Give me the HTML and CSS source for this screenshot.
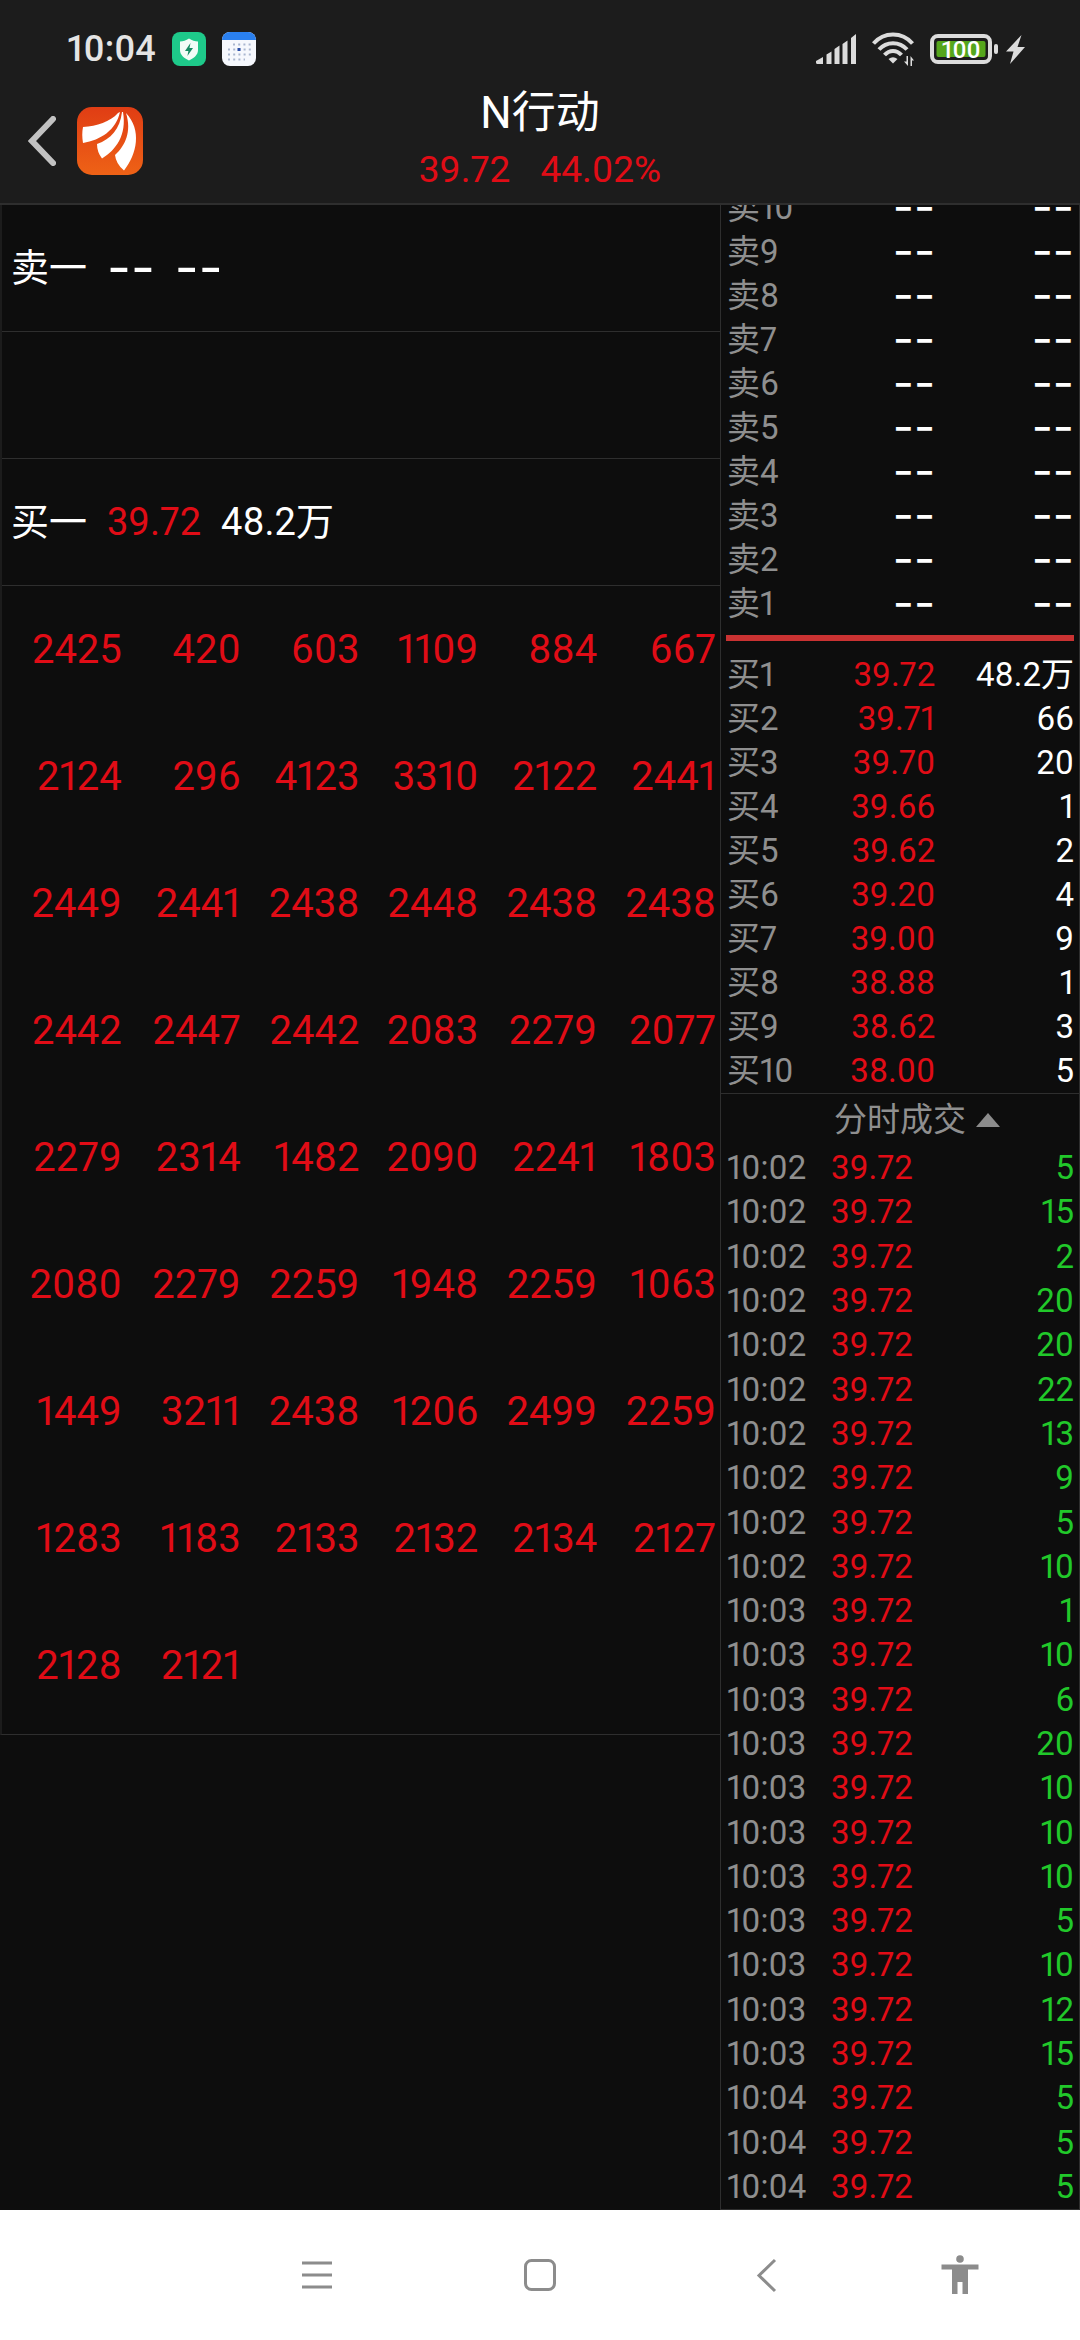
FILE: index.html
```html
<!DOCTYPE html>
<html lang="zh-CN">
<head>
<meta charset="utf-8">
<meta name="viewport" content="width=device-width, initial-scale=1">
<title>N行动</title>
<link rel="stylesheet" href="styles.css">
</head>
<body>
<div class="app">
  <div class="statusbar">
    <div class="status-left">
      <span class="clock">10:04</span>
      <svg class="app-badge" viewBox="0 0 34 34" aria-hidden="true"><rect width="34" height="34" rx="8" fill="#1ec98a"/><path d="M17 6.500C20 8.500 23 9.200 26 9.500V18c0 5-4 8-9 10.500C12 26 8 23 8 18V9.500c3-.3 6-1 9-3z" fill="#f1fcf7"/><path d="M18.500 11l-5.500 8h3.400l-1 5 5.600-8h-3.500z" fill="#168a63"/></svg>
      <svg class="app-badge" viewBox="0 0 34 34" aria-hidden="true"><rect width="34" height="34" rx="8" fill="#f6f8fd"/><path d="M0 8a8 8 0 0 1 8-8h18a8 8 0 0 1 8 8z" fill="#2a80f0"/><path d="M11 12.500h18M6 17.500h23M6 22.500h23M6 27.500h17" stroke="#a9b6cf" stroke-width="2" stroke-dasharray="2 3.200"/><rect x="15.500" y="16" width="3" height="3" fill="#2b4fa8"/></svg>
    </div>
    <div class="status-right">
      <svg class="ic-signal" viewBox="0 0 40 30" aria-hidden="true"><path d="M0 27l7-4v7H1.500Q0 30 0 28.500zM10.500 20.500l5-3V30h-5zM18.500 15l5-3.500V30h-5zM26.500 10l5-3.500V30h-5zM35 4l5-4v30h-5z" fill="#dcdcdc"/></svg>
      <svg class="ic-wifi" viewBox="0 0 42 34" aria-hidden="true"><g fill="none" stroke="#dcdcdc" stroke-width="4"><path d="M1.500 11.500C12-.5 30-.5 40.500 11.500"/><path d="M7 17.500c7.500-8.500 20.500-8.500 28 0"/><path d="M12.500 23c5-5.500 12-5.500 17 0"/></g><path d="M16.500 27q4.500-3.500 9 0L21 31.500z" fill="#dcdcdc"/><path d="M36 24v10l-4-4.500h2.500V24zM38.500 34V24l3.500 4.500h-2V34z" fill="#dcdcdc"/></svg>
      <svg class="ic-battery" viewBox="0 0 68 30" aria-hidden="true"><rect x="2" y="2" width="58" height="26" rx="6" fill="none" stroke="#dcdcdc" stroke-width="4"/><rect x="6.500" y="7" width="49" height="16" rx="2" fill="#55a61c"/><rect x="64" y="10" width="4" height="10" rx="2" fill="#dcdcdc"/><text x="31" y="24" text-anchor="middle" class="battery-text">100</text></svg>
      <svg class="ic-bolt" viewBox="0 0 19 29" aria-hidden="true"><path d="M15.500 0L0 16.500h7.500L4 29 19 12h-7.500z" fill="#dcdcdc"/></svg>
    </div>
  </div>

  <header class="titlebar">
    <div class="title-actions">
      <button class="icon-button" type="button" aria-label="返回"><svg class="ic-back" viewBox="0 0 28 50" aria-hidden="true"><path d="M25 3L4 25l21 22" fill="none" stroke="#c2c2c2" stroke-width="6" stroke-linecap="round"/></svg></button>
      <a class="logo" href="#" aria-label="首页"><svg class="ic-logo" viewBox="0 0 66 68" aria-hidden="true"><defs><linearGradient id="lg" x1="0" y1="0" x2="0" y2="1"><stop offset="0" stop-color="#e03d14"/><stop offset="1" stop-color="#ee6216"/></linearGradient></defs><rect width="66" height="68" rx="15" fill="url(#lg)"/><path d="M41 6C33 15 20 19 6 20c-1 5-1 10 0 16C24 33 39 23 43 5z" fill="#fff"/><path d="M45 5C43 22 34 32 20 37q0 8 5 14.500C39 43 50 28 46 5z" fill="#fff"/><path d="M49 6c6 19-1 33-11 42q1 9 9 15.500C60 47 65 23 49 6z" fill="#fff"/></svg></a>
    </div>
    <div class="title-text">
      <h1 class="name">N行动</h1>
      <p class="quote"><span>39.72</span><span>44.02%</span></p>
    </div>
    <div></div>
  </header>

  <main class="board">
    <section class="queue">
      <div class="queue-row"><span>卖一</span><span class="dash">--</span><span class="dash">--</span></div>
      <div class="queue-row"></div>
      <div class="queue-row"><span>买一</span><span class="up">39.72</span><span>48.2万</span></div>
      <table class="orders">
        <tbody>
          <tr><td>2425</td><td>420</td><td>603</td><td>1109</td><td>884</td><td>667</td></tr>
          <tr><td>2124</td><td>296</td><td>4123</td><td>3310</td><td>2122</td><td>2441</td></tr>
          <tr><td>2449</td><td>2441</td><td>2438</td><td>2448</td><td>2438</td><td>2438</td></tr>
          <tr><td>2442</td><td>2447</td><td>2442</td><td>2083</td><td>2279</td><td>2077</td></tr>
          <tr><td>2279</td><td>2314</td><td>1482</td><td>2090</td><td>2241</td><td>1803</td></tr>
          <tr><td>2080</td><td>2279</td><td>2259</td><td>1948</td><td>2259</td><td>1063</td></tr>
          <tr><td>1449</td><td>3211</td><td>2438</td><td>1206</td><td>2499</td><td>2259</td></tr>
          <tr><td>1283</td><td>1183</td><td>2133</td><td>2132</td><td>2134</td><td>2127</td></tr>
          <tr><td>2128</td><td>2121</td><td></td><td></td><td></td><td></td></tr>
        </tbody>
      </table>
    </section>

    <section class="side">
      <table class="ladder sells">
        <tbody>
          <tr><th scope="row">卖10</th><td class="dash">--</td><td class="dash">--</td></tr>
          <tr><th scope="row">卖9</th><td class="dash">--</td><td class="dash">--</td></tr>
          <tr><th scope="row">卖8</th><td class="dash">--</td><td class="dash">--</td></tr>
          <tr><th scope="row">卖7</th><td class="dash">--</td><td class="dash">--</td></tr>
          <tr><th scope="row">卖6</th><td class="dash">--</td><td class="dash">--</td></tr>
          <tr><th scope="row">卖5</th><td class="dash">--</td><td class="dash">--</td></tr>
          <tr><th scope="row">卖4</th><td class="dash">--</td><td class="dash">--</td></tr>
          <tr><th scope="row">卖3</th><td class="dash">--</td><td class="dash">--</td></tr>
          <tr><th scope="row">卖2</th><td class="dash">--</td><td class="dash">--</td></tr>
          <tr><th scope="row">卖1</th><td class="dash">--</td><td class="dash">--</td></tr>
        </tbody>
      </table>
      <div class="divider"></div>
      <table class="ladder buys">
        <tbody>
          <tr><th scope="row">买1</th><td class="up">39.72</td><td>48.2万</td></tr>
          <tr><th scope="row">买2</th><td class="up">39.71</td><td>66</td></tr>
          <tr><th scope="row">买3</th><td class="up">39.70</td><td>20</td></tr>
          <tr><th scope="row">买4</th><td class="up">39.66</td><td>1</td></tr>
          <tr><th scope="row">买5</th><td class="up">39.62</td><td>2</td></tr>
          <tr><th scope="row">买6</th><td class="up">39.20</td><td>4</td></tr>
          <tr><th scope="row">买7</th><td class="up">39.00</td><td>9</td></tr>
          <tr><th scope="row">买8</th><td class="up">38.88</td><td>1</td></tr>
          <tr><th scope="row">买9</th><td class="up">38.62</td><td>3</td></tr>
          <tr><th scope="row">买10</th><td class="up">38.00</td><td>5</td></tr>
        </tbody>
      </table>
      <button class="trades-toggle" type="button"><span>分时成交</span><svg class="ic-up" viewBox="0 0 24 14" aria-hidden="true"><path d="M12 0l12 14H0z" fill="#8c8c8c"/></svg></button>
      <table class="trades">
        <tbody>
          <tr><td>10:02</td><td class="up">39.72</td><td class="down">5</td></tr>
          <tr><td>10:02</td><td class="up">39.72</td><td class="down">15</td></tr>
          <tr><td>10:02</td><td class="up">39.72</td><td class="down">2</td></tr>
          <tr><td>10:02</td><td class="up">39.72</td><td class="down">20</td></tr>
          <tr><td>10:02</td><td class="up">39.72</td><td class="down">20</td></tr>
          <tr><td>10:02</td><td class="up">39.72</td><td class="down">22</td></tr>
          <tr><td>10:02</td><td class="up">39.72</td><td class="down">13</td></tr>
          <tr><td>10:02</td><td class="up">39.72</td><td class="down">9</td></tr>
          <tr><td>10:02</td><td class="up">39.72</td><td class="down">5</td></tr>
          <tr><td>10:02</td><td class="up">39.72</td><td class="down">10</td></tr>
          <tr><td>10:03</td><td class="up">39.72</td><td class="down">1</td></tr>
          <tr><td>10:03</td><td class="up">39.72</td><td class="down">10</td></tr>
          <tr><td>10:03</td><td class="up">39.72</td><td class="down">6</td></tr>
          <tr><td>10:03</td><td class="up">39.72</td><td class="down">20</td></tr>
          <tr><td>10:03</td><td class="up">39.72</td><td class="down">10</td></tr>
          <tr><td>10:03</td><td class="up">39.72</td><td class="down">10</td></tr>
          <tr><td>10:03</td><td class="up">39.72</td><td class="down">10</td></tr>
          <tr><td>10:03</td><td class="up">39.72</td><td class="down">5</td></tr>
          <tr><td>10:03</td><td class="up">39.72</td><td class="down">10</td></tr>
          <tr><td>10:03</td><td class="up">39.72</td><td class="down">12</td></tr>
          <tr><td>10:03</td><td class="up">39.72</td><td class="down">15</td></tr>
          <tr><td>10:04</td><td class="up">39.72</td><td class="down">5</td></tr>
          <tr><td>10:04</td><td class="up">39.72</td><td class="down">5</td></tr>
          <tr><td>10:04</td><td class="up">39.72</td><td class="down">5</td></tr>
        </tbody>
      </table>
    </section>
  </main>

  <nav class="navbar">
    <button class="icon-button" type="button" aria-label="菜单"><svg class="ic-nav" viewBox="0 0 40 40" aria-hidden="true"><path d="M5 8h30M5 20h30M5 32h30" stroke="#8c8c8c" stroke-width="3"/></svg></button>
    <button class="icon-button" type="button" aria-label="主屏幕"><svg class="ic-nav" viewBox="0 0 40 40" aria-hidden="true"><rect x="5.500" y="5.500" width="29" height="29" rx="6" fill="none" stroke="#8c8c8c" stroke-width="3"/></svg></button>
    <button class="icon-button" type="button" aria-label="后退"><svg class="ic-nav" viewBox="0 0 40 40" aria-hidden="true"><path d="M28 5L12 20.500 28 36" fill="none" stroke="#8c8c8c" stroke-width="3"/></svg></button>
    <button class="icon-button" type="button" aria-label="无障碍"><svg class="ic-nav" viewBox="0 0 40 40" aria-hidden="true"><circle cx="20" cy="4" r="3.800" fill="#8c8c8c"/><path d="M1.500 9.500h37v5H28V39h-5.500V27h-5v12H12V14.500H1.500z" fill="#8c8c8c"/></svg></button>
  </nav>
</div>
</body>
</html>
```
FILE: styles.css
```css
* {
  box-sizing: border-box;
}

body {
  margin: 0;
  background: #0d0d0d;
  color: #fff;
  font-family: Roboto, "Noto Sans CJK SC", sans-serif;
  font-variant-numeric: proportional-nums;
}

h1,
p {
  margin: 0;
  font-weight: 400;
}

svg {
  display: block;
}

table {
  border-spacing: 0;
}

th,
td {
  padding: 0;
  font-weight: 400;
}

button {
  padding: 0;
  border: 0;
  background: none;
  font: inherit;
}

.app {
  display: flex;
  flex-direction: column;
  min-height: 100vh;
}

/* Status bar */
.statusbar {
  display: flex;
  justify-content: space-between;
  align-items: center;
  height: 84px;
  padding: 14px 55px 0 67px;
  background: #1c1c1c;
}

.status-left,
.status-right {
  display: flex;
  align-items: center;
  gap: 16px;
}

.clock {
  color: #e4e4e4;
  font-size: 36px;
  font-weight: 500;
  line-height: 40px;
}

.app-badge {
  width: 34px;
  height: 34px;
}

.ic-signal {
  width: 40px;
  height: 30px;
}

.ic-wifi {
  width: 42px;
  height: 34px;
}

.ic-battery {
  width: 68px;
  height: 30px;
}

.battery-text {
  fill: #fff;
  font-size: 24px;
  font-weight: 500;
}

.ic-bolt {
  width: 19px;
  height: 29px;
  margin-left: -8px;
}

/* Title bar */
.titlebar {
  display: grid;
  grid-template-columns: 1fr auto 1fr;
  align-items: center;
  padding-bottom: 6px;
  border-bottom: 2px solid #2e2e2e;
  background: #1c1c1c;
}

.title-actions {
  display: flex;
  align-items: center;
  gap: 21px;
  padding-left: 28px;
}

.icon-button {
  display: grid;
  place-items: center;
}

.ic-back {
  width: 28px;
  height: 50px;
}

.ic-logo {
  width: 66px;
  height: 68px;
}

.name {
  font-size: 44px;
  line-height: 59px;
  text-align: center;
}

.quote {
  display: flex;
  justify-content: center;
  gap: 30px;
  color: #e00c16;
  font-size: 37px;
  line-height: 54px;
}

/* Two-column board */
.board {
  display: grid;
  grid-template-columns: 2fr 1fr;
  flex: 1;
}

.up {
  color: #e00c16;
}

.down {
  color: #21c82a;
}

.queue {
  align-self: start;
  border-left: 2px solid #1c1c1c;
  border-bottom: 1px solid #2e2e2e;
  font-size: 38px;
}

.queue-row {
  display: flex;
  align-items: center;
  gap: 20px;
  height: 127px;
  padding-left: 9px;
  border-bottom: 1px solid #2e2e2e;
  line-height: 56px;
}

.queue .dash {
  font-family: Inter, sans-serif;
  font-size: 52px;
}

.orders {
  width: 100%;
  padding: 0 4px 5px 1px;
  table-layout: fixed;
  color: #e00c16;
  font-size: 40px;
}

.orders td {
  height: 127px;
  text-align: right;
}

.side {
  display: flex;
  flex-direction: column;
  overflow: hidden;
  border: 1px solid #2e2e2e;
  border-top: 0;
  font-size: 33px;
  line-height: 44px;
}

.ladder,
.trades {
  padding: 0 5px 0 6px;
  table-layout: fixed;
}

.ladder {
  width: 100%;
}

.ladder tr {
  height: 44px;
}

.ladder th {
  width: 28%;
  color: #8f8f8f;
  text-align: left;
}

.ladder td {
  height: 44px;
  text-align: right;
}

.ladder td:nth-child(2) {
  width: 32%;
}

.side .dash {
  font-family: Inter, sans-serif;
  font-size: 46px;
  line-height: 40px;
  vertical-align: top;
}

/* The list is scrolled so that its first row is partly hidden */
.sells {
  margin-top: -19px;
}

.divider {
  height: 6px;
  margin: 9px 5px 12px;
  background: #c93232;
}

.trades-toggle {
  display: flex;
  justify-content: center;
  align-items: center;
  gap: 10px;
  height: 53px;
  padding-left: 34px;
  border-top: 1px solid #2e2e2e;
  color: #8f8f8f;
}

.ic-up {
  width: 24px;
  height: 14px;
}

.trades,
.trades tbody {
  display: flex;
  flex: 1;
  flex-direction: column;
}

.trades tr {
  display: grid;
  flex: 1;
  grid-template-columns: 3fr 4fr 3fr;
  align-items: center;
}

.trades td:first-child {
  color: #8f8f8f;
}

.trades td:last-child {
  text-align: right;
}

/* System navigation */
.navbar {
  display: grid;
  grid-template-columns: 224fr 222fr 232fr 154fr;
  place-items: center;
  height: 130px;
  padding: 0 4% 0 19%;
  background: #fff;
}

.ic-nav {
  width: 40px;
  height: 40px;
}
```
